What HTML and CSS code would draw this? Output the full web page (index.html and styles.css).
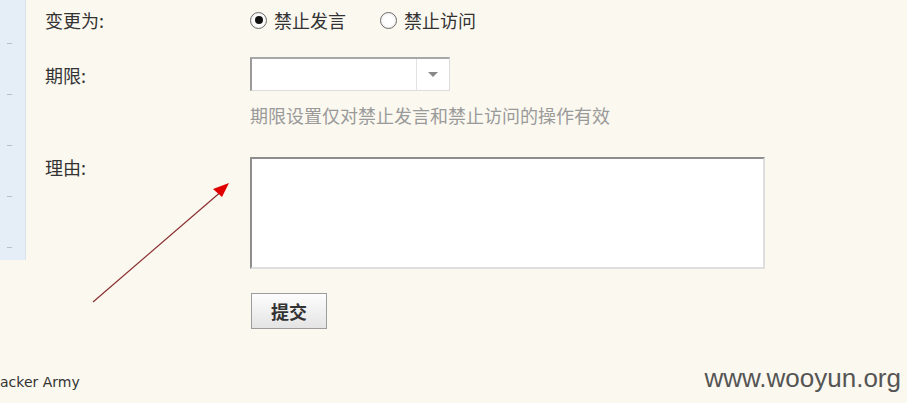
FILE: index.html
```html
<!DOCTYPE html>
<html lang="zh-CN">
<head>
<meta charset="utf-8">
<title>变更状态</title>
<link rel="stylesheet" href="styles.css">
</head>
<body>
<div class="page">
  <div class="top">
    <aside class="sidebar">
      <span class="dash"></span><span class="dash"></span><span class="dash"></span><span class="dash"></span><span class="dash"></span>
    </aside>
    <form class="form">
      <div class="label l-change">变更为:</div>
      <div class="radios">
        <label class="radio"><span class="circle checked"></span><span>禁止发言</span></label>
        <label class="radio second"><span class="circle"></span><span>禁止访问</span></label>
      </div>

      <div class="label l-term">期限:</div>
      <div class="select"><span class="sel-value"></span><span class="sel-btn"><span class="tri"></span></span></div>

      <div class="hint">期限设置仅对禁止发言和禁止访问的操作有效</div>

      <div class="label l-reason">理由:</div>
      <div class="textarea"></div>

      <div class="submit-cell"><button type="button" class="btn">提交</button></div>
    </form>
  </div>
  <footer class="footer">
    <span class="army">acker Army</span>
    <span class="mark">www.wooyun.org</span>
  </footer>
  <svg class="arrow" width="150" height="130" viewBox="0 0 150 130">
    <line x1="7" y1="127" x2="137" y2="15" stroke="#8a3030" stroke-width="1.2"/>
    <polygon points="143,8 127,14 136,22" fill="#e00000"/>
  </svg>
</div>
</body>
</html>
```
FILE: styles.css
```css
* { box-sizing: border-box; }
html, body { margin: 0; padding: 0; }
body {
  background: #fbf8ef;
  width: 907px;
  height: 403px;
  overflow: hidden;
  font-family: "Noto Sans CJK SC", "Noto Sans", sans-serif;
  color: #333;
}
.page { position: relative; height: 403px; }
.top { display: flex; align-items: flex-start; }
.sidebar {
  width: 26px;
  height: 260px;
  background: #e5edf6;
  border-right: 1px solid #dbe4ee;
  display: flex;
  flex-direction: column;
  padding-top: 43px;
  gap: 50px;
}
.dash { display: block; width: 5px; height: 1px; background: #b4c0cc; margin-left: 7px; }
.form {
  display: grid;
  grid-template-columns: 205px 520px;
  padding-left: 19px;
  padding-top: 8px;
  font-size: 18px;
}
.label { line-height: 24px; color: #333; }
.radios { display: flex; align-items: center; height: 24px; }
.radio { display: flex; align-items: center; gap: 7px; line-height: 24px; color: #333; }
.radio.second { margin-left: 34px; }
.circle {
  width: 17px; height: 17px;
  border-radius: 50%;
  border: 1.5px solid #6b6b6b;
  background: radial-gradient(circle, #fff 40%, #e8e8e8 100%);
  display: flex; align-items: center; justify-content: center;
}
.circle.checked::after {
  content: "";
  width: 8px; height: 8px; border-radius: 50%;
  background: #111;
}
.l-term { margin-top: 25px; align-self: center; transform: translateY(1px); }
.select {
  margin-top: 25px;
  width: 200px; height: 34px;
  display: flex;
  background: #fff;
  border-top: 2px solid #a8a8a8;
  border-left: 2px solid #9a9a9a;
  border-right: 1px solid #dcdcdc;
  border-bottom: 1px solid #dcdcdc;
}
.sel-value { flex: 1; }
.sel-btn {
  width: 33px;
  border-left: 1px solid #e2e2e2;
  display: flex; align-items: center; justify-content: center;
}
.tri { width: 0; height: 0; border-left: 5px solid transparent; border-right: 5px solid transparent; border-top: 5px solid #888; }
.hint { grid-column: 2; margin-top: 12px; line-height: 24px; color: #9a9a9a; }
.l-reason { margin-top: 30px; line-height: 20px; }
.textarea {
  margin-top: 30px;
  width: 515px; height: 112px;
  background: #fff;
  border-top: 2px solid #8e8e8e;
  border-left: 2px solid #8e8e8e;
  border-right: 2px solid #dedede;
  border-bottom: 2px solid #dedede;
}
.submit-cell { grid-column: 2; margin-top: 24px; }
.btn {
  margin-left: 1px;
  width: 76px; height: 36px;
  border: 1px solid #9c9c9c;
  background: linear-gradient(#fdfdfd, #e4e4e4);
  font-family: "Noto Sans CJK SC", sans-serif;
  font-size: 18px;
  font-weight: bold;
  color: #333;
  padding: 0;
  line-height: 1;
}
.footer {
  display: flex;
  justify-content: space-between;
  align-items: baseline;
  margin-top: 34px;
  padding-right: 6px;
}
.army { font-family: "DejaVu Sans", sans-serif; font-size: 14px; color: #333; margin-left: 0; }
.mark { font-family: "Liberation Sans", Arial, sans-serif; font-size: 26px; color: #555; }
.arrow { position: absolute; left: 86px; top: 175px; }
```
